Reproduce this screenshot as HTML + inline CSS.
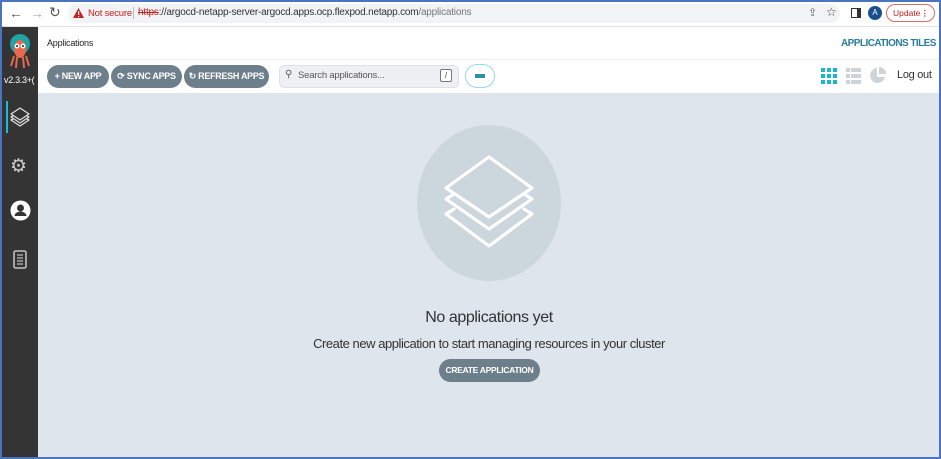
<!DOCTYPE html>
<html><head><style>
*{margin:0;padding:0;box-sizing:border-box}
body{width:941px;height:459px;overflow:hidden;font-family:"Liberation Sans",sans-serif;background:#fff;position:relative}
.frame{position:absolute;left:0;top:0;width:941px;height:459px;border:2px solid #4a74c0;z-index:10;pointer-events:none}
.abs{position:absolute;white-space:nowrap}
.omni{left:68px;top:4px;width:772px;height:19px;background:#f1f3f4;border-radius:10px}
.btn{position:absolute;top:65px;height:23px;background:#6d7f8b;border-radius:12px;color:#fff;font-size:9px;font-weight:bold;line-height:23px;text-align:center;letter-spacing:-0.3px;white-space:nowrap}
</style></head><body>
<div class="frame"></div>
<div class="abs" style="left:0;top:0;width:941px;height:27px;background:#fff;border-bottom:1px solid #e3e3e3"></div>
<div class="abs" style="left:9px;top:5px;font-size:14px;color:#555">←</div>
<div class="abs" style="left:30px;top:5px;font-size:14px;color:#aaa">→</div>
<div class="abs" style="left:49px;top:4px;font-size:14px;color:#555">↻</div>
<div class="abs omni"></div>
<svg class="abs" style="left:73px;top:8px" width="11" height="10"><path d="M5.5 0L11 10H0Z" fill="#c5221f"/><rect x="5" y="3" width="1.2" height="4" fill="#fff"/><rect x="5" y="8" width="1.2" height="1.2" fill="#fff"/></svg>
<div class="abs" style="left:88px;top:8px;font-size:9.5px;color:#c5221f;letter-spacing:-0.2px">Not secure</div>
<div class="abs" style="left:133px;top:7px;width:1px;height:12px;background:#bbb"></div>
<div class="abs" style="left:138px;top:7px;font-size:10px;color:#333;letter-spacing:-0.2px"><span style="color:#c5221f;text-decoration:line-through">https</span>://argocd-netapp-server-argocd.apps.ocp.flexpod.netapp.com<span style="color:#777">/applications</span></div>
<div class="abs" style="left:808px;top:6px;font-size:11px;color:#666">⇪</div>
<div class="abs" style="left:826px;top:5px;font-size:12px;color:#444">☆</div>
<div class="abs" style="left:851px;top:8px;width:10px;height:10px;border:1.5px solid #333;border-right-width:4px"></div>
<div class="abs" style="left:868px;top:6px;width:14px;height:14px;border-radius:50%;background:#1a4f8b;color:#fff;font-size:8px;text-align:center;line-height:14px">A</div>
<div class="abs" style="left:886px;top:4px;width:49px;height:18px;border:1px solid #e06b63;border-radius:9px;color:#c5221f;font-size:8.5px;line-height:16px;padding-left:6px">Update<span style="position:absolute;right:5px;font-weight:bold">⋮</span></div>
<div class="abs" style="left:2px;top:27px;width:36px;height:432px;background:#343434"></div>
<svg class="abs" style="left:7px;top:32px" width="26" height="42" viewBox="0 0 26 42"><circle cx="13" cy="12" r="10" fill="#1fa3a3"/><ellipse cx="13" cy="17" rx="6" ry="9" fill="#e9694f"/><path d="M7 24l-3 10M10 25l-1 11M16 25l1 11M19 24l3 10" stroke="#e9694f" stroke-width="2"/><circle cx="10" cy="14" r="2.5" fill="#fff"/><circle cx="16" cy="14" r="2.5" fill="#fff"/><circle cx="10" cy="14" r="1" fill="#222"/><circle cx="16" cy="14" r="1" fill="#222"/></svg>
<div class="abs" style="left:4px;top:75px;font-size:9px;color:#fff;letter-spacing:-0.3px">v2.3.3+(</div>
<div class="abs" style="left:6px;top:101px;width:2px;height:32px;background:#18bed6"></div>
<svg class="abs" style="left:10px;top:106px" width="20" height="22" viewBox="0 0 20 22" fill="none" stroke="#ddd" stroke-width="1.3" stroke-linejoin="round"><path d="M10 2L19 8 10 14 1 8Z"/><path d="M3 10L1 11l9 6 9-6-2-1"/><path d="M3 13L1 14l9 6 9-6-2-1"/></svg>
<div class="abs" style="left:10px;top:155px;font-size:19px;color:#ccc">⚙</div>
<svg class="abs" style="left:10px;top:200px" width="21" height="21"><circle cx="10.5" cy="10.5" r="10" fill="#fff"/><circle cx="10.5" cy="8" r="3.5" fill="#343434"/><path d="M4.5 16a6 4.5 0 0 1 12 0Z" fill="#343434"/></svg>
<svg class="abs" style="left:13px;top:250px" width="14" height="20"><rect x="1" y="1" width="12" height="17" rx="1.5" fill="none" stroke="#ddd" stroke-width="1.3"/><path d="M4 5h6M4 8h6M4 11h6M4 14h6" stroke="#ddd"/></svg>
<div class="abs" style="left:47px;top:38px;font-size:9px;color:#222;letter-spacing:-0.2px">Applications</div>
<div class="abs" style="left:841px;top:38px;font-size:10px;font-weight:bold;color:#2b7d9c;letter-spacing:-0.55px">APPLICATIONS TILES</div>
<div class="abs" style="left:38px;top:59px;width:901px;height:1px;background:#eceff1"></div>
<div class="btn" style="left:47px;width:62px">+ NEW APP</div>
<div class="btn" style="left:111px;width:71px">⟳ SYNC APPS</div>
<div class="btn" style="left:184px;width:85px">↻ REFRESH APPS</div>
<div class="abs" style="left:279px;top:65px;width:180px;height:23px;background:#eef1f4;border:1px solid #dde2e6;border-radius:5px"></div>
<div class="abs" style="left:285px;top:69px;font-size:10px;color:#555">⚲</div>
<div class="abs" style="left:298px;top:70px;font-size:9.5px;color:#555;letter-spacing:-0.2px">Search applications...</div>
<div class="abs" style="left:440px;top:69px;width:12px;height:13px;border:1px solid #777;border-radius:2px;font-size:8px;text-align:center;line-height:11px;color:#444;background:#fff">/</div>
<div class="abs" style="left:465px;top:64px;width:30px;height:24px;border:1.5px solid #8fdde8;border-radius:12px;background:#fff"></div>
<div class="abs" style="left:475px;top:74px;width:10px;height:4px;background:#2a8fa8"></div>
<svg class="abs" style="left:821px;top:68px" width="16" height="16"><g fill="#19b7cc"><rect x="0" y="0" width="4" height="4"/><rect x="6" y="0" width="4" height="4"/><rect x="12" y="0" width="4" height="4"/><rect x="0" y="6" width="4" height="4"/><rect x="6" y="6" width="4" height="4"/><rect x="12" y="6" width="4" height="4"/><rect x="0" y="12" width="4" height="4"/><rect x="6" y="12" width="4" height="4"/><rect x="12" y="12" width="4" height="4"/></g></svg>
<svg class="abs" style="left:846px;top:68px" width="15" height="16"><g fill="#ccd3d9"><rect x="0" y="0" width="4" height="4"/><rect x="5" y="0" width="10" height="4"/><rect x="0" y="6" width="4" height="4"/><rect x="5" y="6" width="10" height="4"/><rect x="0" y="12" width="4" height="4"/><rect x="5" y="12" width="10" height="4"/></g></svg>
<svg class="abs" style="left:870px;top:67px" width="16" height="17"><path d="M7 1A7.5 7.5 0 1 0 15 10H7Z" fill="#ccd3d9"/><path d="M9 0A7 7 0 0 1 16 7H9Z" fill="#ccd3d9"/></svg>
<div class="abs" style="left:897px;top:69px;font-size:11px;color:#333;letter-spacing:-0.3px">Log out</div>
<div class="abs" style="left:38px;top:93px;width:901px;height:364px;background:#dee5ec"></div>
<div class="abs" style="left:417px;top:125px;width:144px;height:156px;border-radius:50%;background:#ccd6dd"></div>
<svg class="abs" style="left:440px;top:152px" width="100" height="102" viewBox="0 0 100 102" fill="none" stroke="#fff" stroke-width="3.2" stroke-linecap="round" stroke-linejoin="round"><path d="M49 5L92 36 49 65 6 36Z"/><path d="M14 42L6 47 49 77 92 47 84 42"/><path d="M14 57L6 62 49 94 92 62 84 57"/></svg>
<div class="abs" style="left:0;width:978px;top:309px;text-align:center;font-size:16px;color:#333;letter-spacing:-0.4px">No applications yet</div>
<div class="abs" style="left:0;width:978px;top:336px;text-align:center;font-size:13px;color:#333;letter-spacing:-0.45px">Create new application to start managing resources in your cluster</div>
<div class="abs" style="left:439px;top:359px;width:101px;height:23px;border-radius:12px;background:#6d7f8b;color:#fff;font-size:8.5px;font-weight:bold;text-align:center;line-height:23px;letter-spacing:-0.3px">CREATE APPLICATION</div>
</body></html>
